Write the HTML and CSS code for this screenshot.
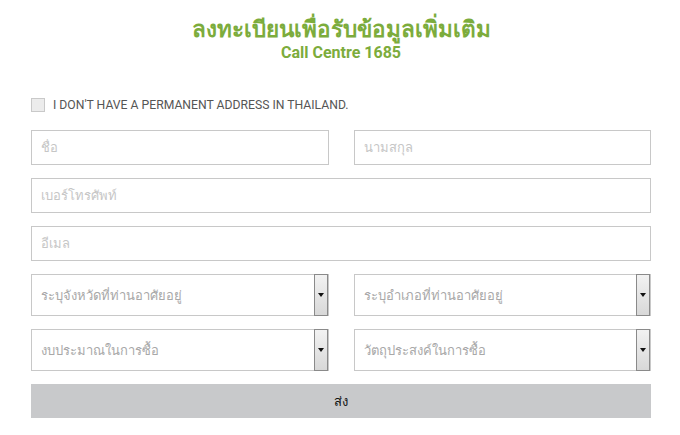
FILE: index.html
```html
<!DOCTYPE html>
<html lang="th">
<head>
    <meta charset="UTF-8" />
    <title>ลงทะเบียนเพื่อรับข้อมูลเพิ่มเติม</title>
    <link rel="stylesheet" href="styles.css">
</head>
<body>
    <div class="container">
        <header>
            <h1>ลงทะเบียนเพื่อรับข้อมูลเพิ่มเติม</h1>
            <h2>Call Centre 1685</h2>
        </header>

        <form class="reg-form">
            <label class="check">
                <span class="box"></span>
                I DON'T HAVE A PERMANENT ADDRESS IN THAILAND.
            </label>

            <div class="row">
                <input type="text" placeholder="ชื่อ">
                <input type="text" placeholder="นามสกุล">
            </div>

            <input type="text" placeholder="เบอร์โทรศัพท์">
            <input type="text" placeholder="อีเมล">

            <div class="row">
                <div class="select">
                    <span class="value">ระบุจังหวัดที่ท่านอาศัยอยู่</span>
                    <span class="arrow"></span>
                </div>
                <div class="select">
                    <span class="value">ระบุอำเภอที่ท่านอาศัยอยู่</span>
                    <span class="arrow"></span>
                </div>
            </div>

            <div class="row">
                <div class="select">
                    <span class="value">งบประมาณในการซื้อ</span>
                    <span class="arrow"></span>
                </div>
                <div class="select">
                    <span class="value">วัตถุประสงค์ในการซื้อ</span>
                    <span class="arrow"></span>
                </div>
            </div>

            <button type="button">ส่ง</button>
        </form>
    </div>
</body>
</html>
```

FILE: styles.css
```css
* {
    box-sizing: border-box;
    margin: 0;
    padding: 0;
}

body {
    font-family: Roboto, "Noto Sans", sans-serif;
    background-color: #ffffff;
    color: #555555;
}

.container {
    width: 620px;
    margin-left: 31px;
}

header {
    text-align: center;
    padding-top: 15px;
    color: #7cac3c;
}

header h1 {
    font-size: 22.5px;
    font-weight: bold;
    line-height: 28px;
}

header h2 {
    font-size: 16px;
    font-weight: bold;
    line-height: 20px;
}

.reg-form {
    display: flex;
    flex-direction: column;
    gap: 13px;
    margin-top: 34px;
}

.check {
    display: flex;
    align-items: center;
    gap: 8px;
    font-size: 12.2px;
    color: #555555;
    height: 16px;
    margin-bottom: 4px;
}

.check .box {
    width: 14px;
    height: 14px;
    border: 1px solid #c9c9c9;
    background-color: #ececec;
}

.row {
    display: flex;
    gap: 25px;
}

.row > * {
    flex: 1;
}

input {
    height: 35px;
    border: 1px solid #c8c8c8;
    padding: 0 9px;
    font-family: inherit;
    font-size: 13px;
    color: #555555;
    width: 100%;
}

input::placeholder {
    color: #c6c6c6;
}

.select {
    height: 42px;
    border: 1px solid #c8c8c8;
    display: flex;
    align-items: center;
    font-size: 13px;
    color: #a8a8a8;
}

.select .value {
    flex: 1;
    padding-left: 9px;
}

.select .arrow {
    width: 14px;
    height: 42px;
    margin-top: -2px;
    margin-bottom: -2px;
    border: 1px solid #8a8a8a;
    background: linear-gradient(#f2f2f2, #d8d8d8);
    position: relative;
}

.select .arrow::after {
    content: "";
    position: absolute;
    left: 3px;
    top: 18px;
    border-left: 3.5px solid transparent;
    border-right: 3.5px solid transparent;
    border-top: 4px solid #111111;
}

button {
    height: 34px;
    border: none;
    background-color: #c8c9cb;
    color: #111111;
    font-family: inherit;
    font-size: 13px;
}
```
